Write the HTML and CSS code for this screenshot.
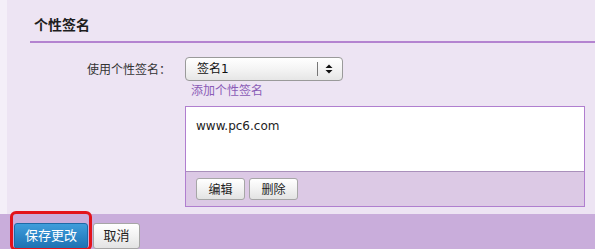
FILE: index.html
```html
<!DOCTYPE html>
<html lang="zh-CN">
<head>
<meta charset="utf-8">
<title>个性签名</title>
<link rel="stylesheet" href="styles.css">
</head>
<body>
<div class="page">
  <div class="main">
    <div class="section">
      <h2 class="section-title">个性签名</h2>
      <div class="form-row">
        <label class="field-label">使用个性签名：</label>
        <div class="field">
          <div class="select">
            <span class="select-value">签名1</span>
            <span class="select-sep"></span>
            <svg class="select-arrows" width="8" height="10" viewBox="0 0 8 10">
              <path d="M4 0.5 L7.5 4 L0.5 4 Z" fill="#111"/>
              <path d="M4 9.5 L7.5 6 L0.5 6 Z" fill="#111"/>
            </svg>
          </div>
          <a class="add-link">添加个性签名</a>
          <div class="sig-box">
            <div class="sig-text">www.pc6.com</div>
            <div class="sig-actions">
              <button class="btn">编辑</button>
              <button class="btn">删除</button>
            </div>
          </div>
        </div>
      </div>
    </div>
  </div>
  <div class="bottom-bar">
    <button class="btn-primary">保存更改</button>
    <button class="btn btn-cancel">取消</button>
    <span class="highlight"></span>
  </div>
</div>
</body>
</html>
```

FILE: styles.css
```css
html, body {
  margin: 0;
  padding: 0;
}
body {
  width: 595px;
  height: 249px;
  overflow: hidden;
  background: #ede4f3;
  font-family: "DejaVu Sans", "Noto Sans CJK SC", sans-serif;
  font-size: 12px;
  color: #333;
}
.page {
  display: flex;
  flex-direction: column;
  height: 249px;
}
.main {
  height: 218px;
  box-sizing: border-box;
  border-left: 7px solid #f4eff8;
  background: #ede4f3;
}
.section {
  margin-left: 23px;
}
.section-title {
  margin: 0;
  padding: 14px 0 7px 4px;
  font-family: "Noto Sans CJK SC", sans-serif;
  font-size: 14px;
  font-weight: bold;
  line-height: 20px;
  color: #1e1e1e;
  border-bottom: 2px solid #b483d0;
}
.form-row {
  display: flex;
  margin-top: 14px;
}
.field-label {
  width: 141px;
  margin-right: 14px;
  text-align: right;
  line-height: 24px;
  font-family: "Noto Sans CJK SC", sans-serif;
  color: #333;
}
.field {
  display: flex;
  flex-direction: column;
  align-items: flex-start;
}
.select {
  width: 158px;
  height: 24px;
  box-sizing: border-box;
  border: 1px solid #9a9a9a;
  border-radius: 4px;
  background: linear-gradient(#ffffff, #f4f4f4 50%, #e6e6e6);
  display: flex;
  align-items: center;
  padding-left: 11px;
}
.select-value {
  flex: 1;
  color: #111;
  line-height: 22px;
}
.select-sep {
  width: 1px;
  height: 14px;
  background: #777;
  margin-right: 7px;
}
.select-arrows {
  margin-right: 9px;
}
.add-link {
  margin-left: 6px;
  line-height: 18px;
  color: #8a5bb6;
  font-family: "Noto Sans CJK SC", sans-serif;
  cursor: pointer;
}
.sig-box {
  margin-top: 7px;
  width: 400px;
  box-sizing: border-box;
  border: 1px solid #b07ecf;
  background: #fff;
}
.sig-text {
  height: 64px;
  box-sizing: border-box;
  padding: 10px 10px 0;
  line-height: 18px;
  color: #222;
}
.sig-actions {
  display: flex;
  gap: 4px;
  border-top: 1px solid #a990bb;
  background: #dcc9e5;
  padding: 6px 10px;
  height: 22px;
}
.btn {
  width: 49px;
  height: 22px;
  box-sizing: border-box;
  padding: 0;
  border: 1px solid #a6a6a6;
  border-radius: 3px;
  background: linear-gradient(#ffffff, #f2f2f2 50%, #e3e3e3);
  font-family: "Noto Sans CJK SC", sans-serif;
  font-size: 12px;
  color: #222;
  line-height: 20px;
}
.bottom-bar {
  position: relative;
  flex: 1;
  background: #c9addb;
  display: flex;
  align-items: flex-start;
  gap: 5px;
  padding: 9px 0 0 14px;
}
.btn-primary {
  width: 74px;
  height: 26px;
  box-sizing: border-box;
  padding: 0 0 2px;
  border: 1px solid #1d6aa6;
  border-radius: 3px;
  background: linear-gradient(#3f9ddb, #2a83c4 60%, #1f72b2);
  font-family: "Noto Sans CJK SC", sans-serif;
  font-size: 13px;
  color: #fff;
  line-height: 22px;
}
.btn-cancel {
  width: 47px;
  height: 26px;
  padding-bottom: 2px;
  font-size: 13px;
}
.highlight {
  position: absolute;
  left: 10px;
  top: -3px;
  width: 82px;
  height: 40px;
  box-sizing: border-box;
  border: 3px solid #e3131b;
  border-radius: 6px;
  pointer-events: none;
}
```
